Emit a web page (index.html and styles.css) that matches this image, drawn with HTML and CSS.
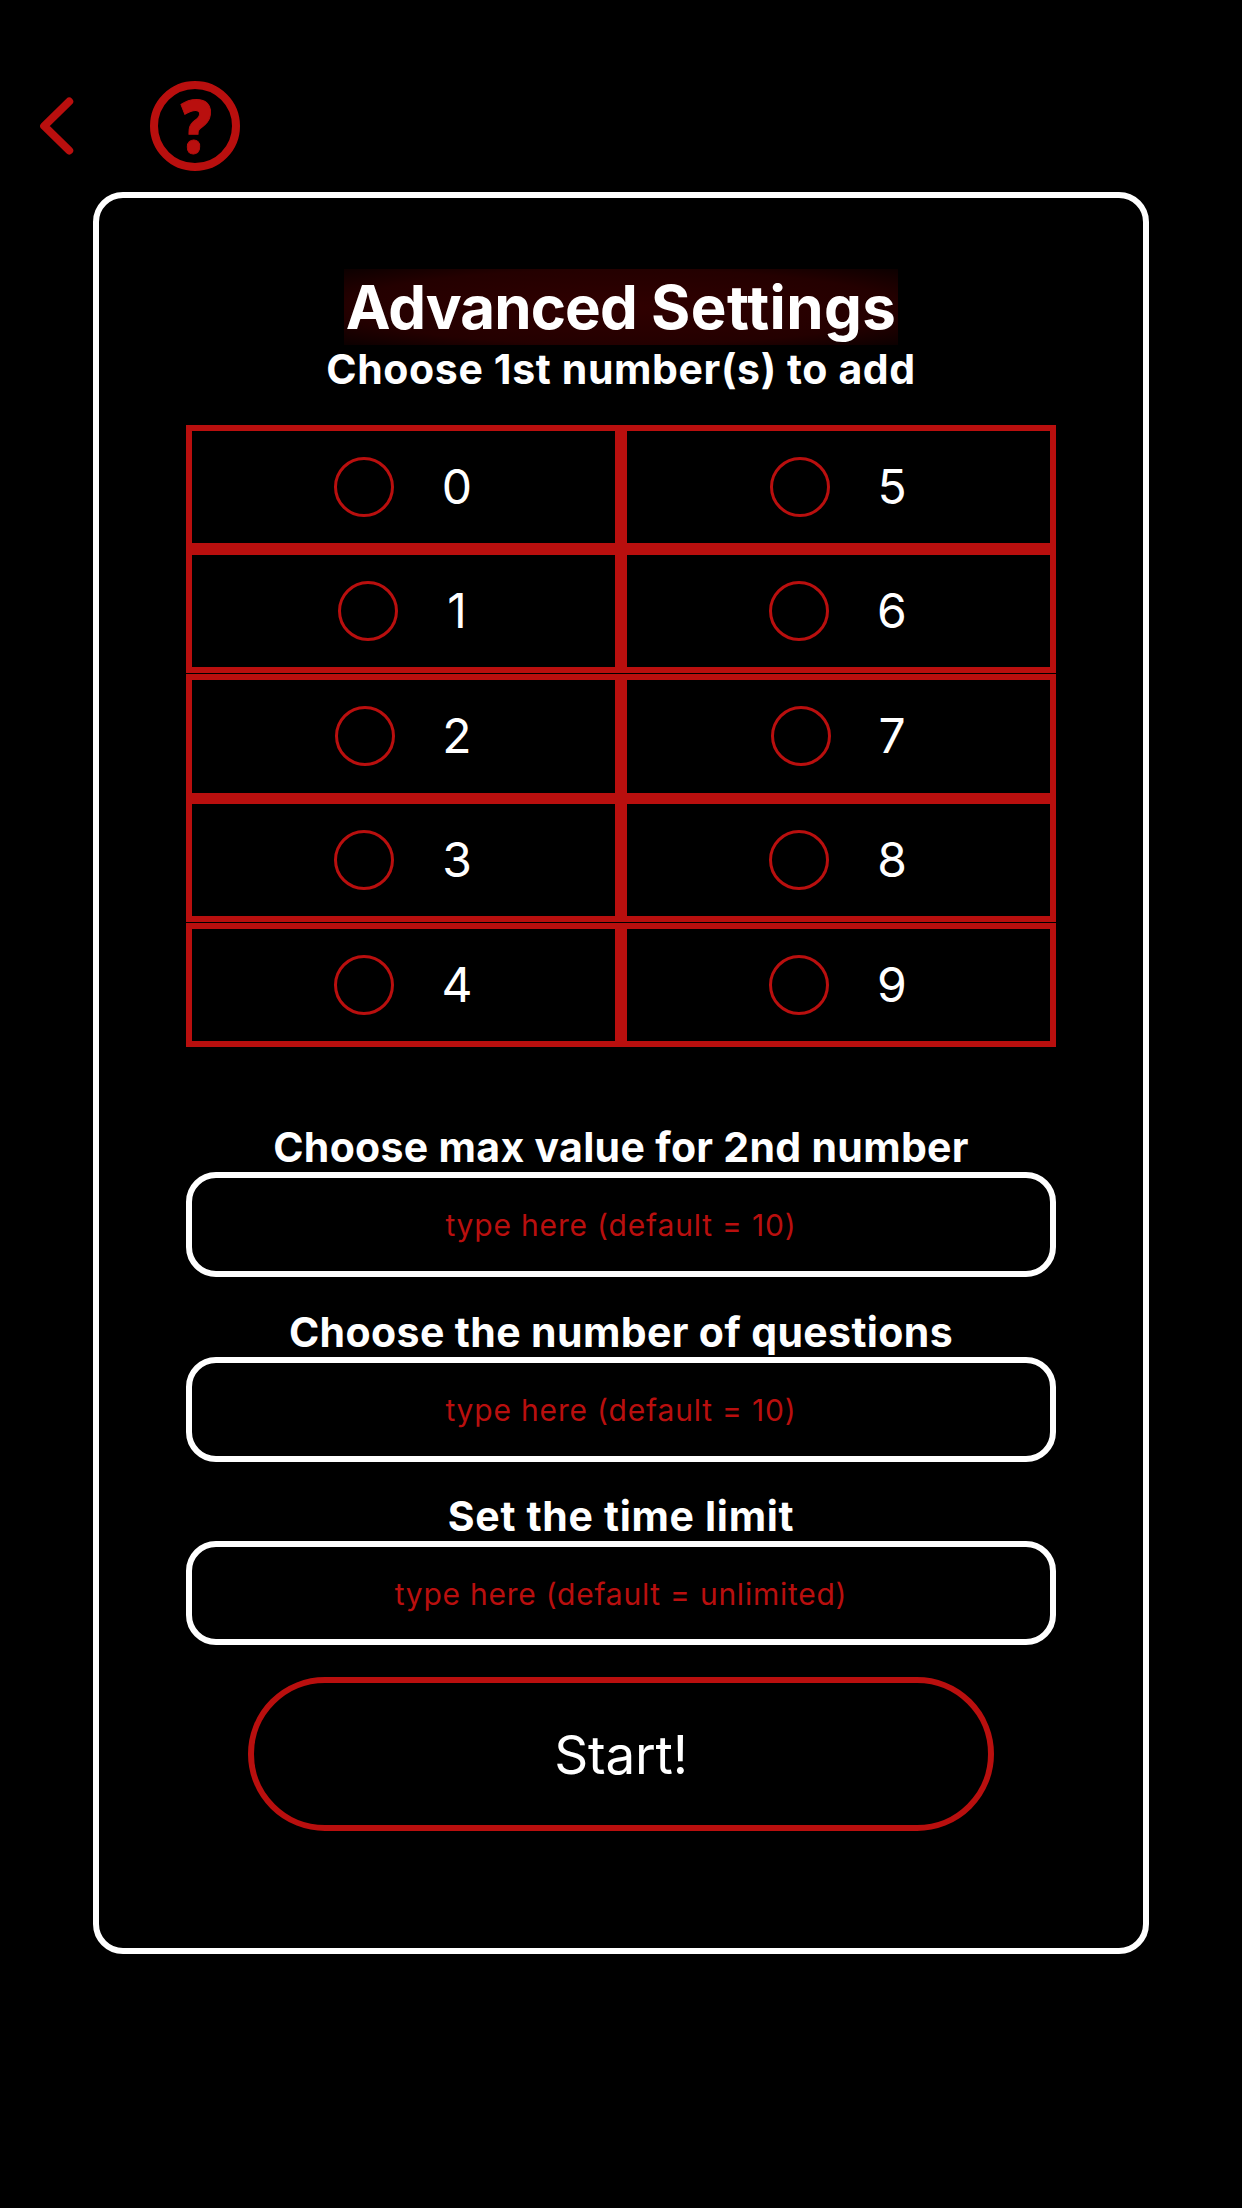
FILE: index.html
```html
<!DOCTYPE html>
<html lang="en">
<head>
<meta charset="utf-8">
<title>Advanced Settings</title>
<link rel="stylesheet" href="styles.css">
</head>
<body>
<header class="topbar">
  <svg class="back" width="36" height="60" viewBox="0 0 36 60" role="img" aria-label="Back"><path d="M29.2 5.5 L4.2 30 L29.2 54.5"/></svg>
  <div class="help"><span class="help-mark">?</span></div>
</header>
<main class="card">
  <h1 class="title"><span class="tight">Advanced</span> <span class="loose">Settings</span></h1>
  <h2 class="label subtitle">Choose 1st number(s) to add</h2>
  <div class="numbers">
    <div class="cell"><i class="radio"></i><span class="digit">0</span></div>
    <div class="cell"><i class="radio"></i><span class="digit mid">5</span></div>
    <div class="cell"><i class="radio"></i><span class="digit narrow">1</span></div>
    <div class="cell"><i class="radio"></i><span class="digit">6</span></div>
    <div class="cell tall"><i class="radio"></i><span class="digit mid">2</span></div>
    <div class="cell tall"><i class="radio"></i><span class="digit slim">7</span></div>
    <div class="cell"><i class="radio"></i><span class="digit">3</span></div>
    <div class="cell"><i class="radio"></i><span class="digit">8</span></div>
    <div class="cell"><i class="radio"></i><span class="digit">4</span></div>
    <div class="cell"><i class="radio"></i><span class="digit">9</span></div>
  </div>
  <section class="field first"><h2 class="label max">Choose max value for 2nd number</h2><div class="input">type here (default = 10)</div></section>
  <section class="field middle"><h2 class="label count">Choose the number of questions</h2><div class="input">type here (default = 10)</div></section>
  <section class="field last"><h2 class="label time">Set the time limit</h2><div class="input">type here (default = unlimited)</div></section>
  <div class="start">Start!</div>
</main>
</body>
</html>
```
FILE: styles.css
```css
* { box-sizing: border-box; }
body { margin: 0; width: 1242px; height: 2208px; background: #000; color: #fff; font-family: Inter, "Liberation Sans", sans-serif; overflow: hidden; }
.topbar { display: flex; align-items: center; height: 192px; padding: 60px 0 0 40px; gap: 74px; }
.back { fill: none; stroke: #b90f0e; stroke-width: 8; stroke-linecap: round; stroke-linejoin: round; }
.help { width: 90px; height: 90px; border: 8px solid #b90f0e; border-radius: 50%; display: flex; justify-content: center; }
.help-mark { color: #b90f0e; font: 800 74px/71px "Open Sans", sans-serif; -webkit-text-stroke: 1px #b90f0e; transform: translateX(1px) scaleX(0.83) skewX(-2deg); }
.card { width: 1056px; height: 1762px; margin: 0 93px; padding: 71px 87px 0; border: 6px solid #fff; border-radius: 30px; display: flex; flex-direction: column; align-items: center; }
.title { margin: 0; width: 554px; height: 76px; font-size: 60px; font-weight: 700; line-height: 76px; text-align: center; white-space: nowrap; background: radial-gradient(ellipse at center, #300000 0%, #240000 70%, #0c0000 100%); }
.tight { letter-spacing: -0.9px; }
.loose { letter-spacing: 0.4px; }
.label { margin: 0; height: 48px; font-size: 41px; font-weight: 700; line-height: 46px; white-space: nowrap; }
.subtitle { margin-top: 1px; letter-spacing: 0.63px; }
.max { letter-spacing: 0.31px; }
.count { letter-spacing: 0.38px; }
.time { letter-spacing: 0.68px; }
.numbers { display: grid; grid-template-columns: 435px 435px; grid-template-rows: 124px 125px 124px 125px 124px; margin-top: 31px; }
.cell { height: 124px; border: 6px solid #b90f0e; padding-top: 26px; display: flex; align-items: flex-start; justify-content: center; gap: 47px; }
.tall { height: 125px; }
.radio { width: 60px; height: 60px; border: 3px solid #b90f0e; border-radius: 50%; }
.digit { width: 32px; font-size: 48px; line-height: 60px; display: flex; justify-content: center; }
.mid { width: 30px; }
.slim { width: 28px; }
.narrow { width: 24px; }
.field { width: 870px; height: 185px; display: flex; flex-direction: column; align-items: center; }
.first { margin-top: 77px; }
.middle { height: 184px; }
.last { height: 184px; }
.input { width: 870px; height: 105px; border: 6px solid #fff; border-radius: 30px; display: flex; align-items: center; justify-content: center; color: #b90f0e; font-size: 30px; letter-spacing: 0.82px; white-space: nowrap; }
.last .input { height: 104px; padding-top: 2px; letter-spacing: 0.75px; }
.start { width: 746px; height: 154px; padding-top: 2px; border: 6px solid #b90f0e; border-radius: 77px; display: flex; align-items: center; justify-content: center; font-size: 53px; letter-spacing: -0.2px; }
```
